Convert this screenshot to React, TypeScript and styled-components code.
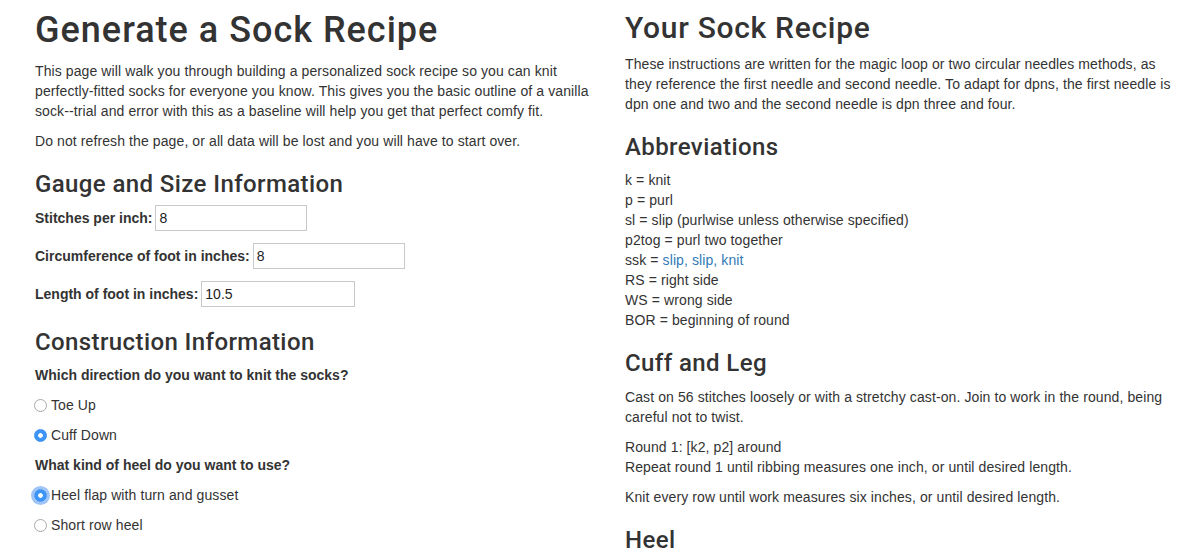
import styled, { createGlobalStyle } from 'styled-components';

/** style Start */
const GlobalStyle = createGlobalStyle`
  * {
    box-sizing: border-box;
  }
  body {
    margin: 0;
    background: #fff;
    color: #333;
    font-family: 'Liberation Sans', Arial, sans-serif;
    font-size: 14px;
    line-height: 20px;
    letter-spacing: 0.1px;
  }
`;

const Container = styled.div`
  padding: 0 20px;
  display: grid;
  grid-template-columns: 590px 590px;
`;

const Column = styled.section`
  padding: 0 15px;
  & > :first-child {
    margin-top: 11px;
  }
`;

const Title = styled.h1<{ $size: number; $spacing: number }>`
  font-family: Roboto, 'Liberation Sans', sans-serif;
  font-size: ${(props) => props.$size}px;
  line-height: 1.1;
  font-weight: 500;
  letter-spacing: ${(props) => props.$spacing}px;
  margin: 20px 0 10px;
`;

const SubTitle = styled.h3`
  font-family: Roboto, 'Liberation Sans', sans-serif;
  font-size: 24px;
  line-height: 26.4px;
  font-weight: 500;
  letter-spacing: 0.4px;
  margin: 20px 0 10px;
`;

const Text = styled.p`
  margin: 0 0 10px;
`;

const Link = styled.a`
  color: #337ab7;
  text-decoration: none;
`;

const FieldGroup = styled.div`
  display: grid;
  row-gap: 12px;
  margin: -2px 0 22px;
`;

const Field = styled.div`
  display: flex;
  align-items: center;
  height: 26px;
`;

const Label = styled.label`
  font-weight: 700;
  letter-spacing: 0;
  margin-right: 3px;
`;

const Input = styled.input<{ $width?: number }>`
  width: ${(props) => props.$width ?? 152}px;
  height: 26px;
  border: 1px solid #c9c9c9;
  padding: 0 3px;
  font-family: inherit;
  font-size: 14px;
  color: #222;
  outline: none;
`;

const Question = styled.div`
  font-weight: 700;
  letter-spacing: 0;
  margin-bottom: 10px;
`;

const Choice = styled.label`
  display: flex;
  align-items: center;
  height: 20px;
  margin-bottom: 10px;
`;

const Radio = styled.input<{ $focused?: boolean }>`
  appearance: none;
  width: 13px;
  height: 13px;
  margin: 0 4px 0 -1px;
  border-radius: 50%;
  border: 1px solid #a8a8a8;
  background: #fff;
  &:checked {
    border-color: #3b8ff0;
    background: radial-gradient(circle, #fff 0 2px, #3d96f7 2.6px);
  }
  ${(props) =>
    props.$focused &&
    `box-shadow: 0 0 0 3px rgba(80, 150, 240, 0.55);`}
`;
/** style End */

const abbreviations = [
  ['k', 'knit'],
  ['p', 'purl'],
  ['sl', 'slip (purlwise unless otherwise specified)'],
  ['p2tog', 'purl two together'],
  ['ssk', 'slip, slip, knit'],
  ['RS', 'right side'],
  ['WS', 'wrong side'],
  ['BOR', 'beginning of round'],
];

function App() {
  return (
    <>
      <GlobalStyle />
      <Container>
        <Column>
          <Title $size={36} $spacing={1}>
            Generate a Sock Recipe
          </Title>
          <Text>
            This page will walk you through building a personalized sock recipe so you can knit
            perfectly-fitted socks for everyone you know. This gives you the basic outline of a
            vanilla sock--trial and error with this as a baseline will help you get that perfect
            comfy fit.
          </Text>
          <Text>Do not refresh the page, or all data will be lost and you will have to start over.</Text>

          <SubTitle>Gauge and Size Information</SubTitle>
          <FieldGroup>
            <Field>
              <Label>Stitches per inch:</Label>
              <Input type="text" defaultValue="8" />
            </Field>
            <Field>
              <Label>Circumference of foot in inches:</Label>
              <Input type="text" defaultValue="8" />
            </Field>
            <Field>
              <Label>Length of foot in inches:</Label>
              <Input type="text" defaultValue="10.5" $width={154} />
            </Field>
          </FieldGroup>

          <SubTitle>Construction Information</SubTitle>
          <Question>Which direction do you want to knit the socks?</Question>
          <Choice>
            <Radio type="radio" name="direction" />
            Toe Up
          </Choice>
          <Choice>
            <Radio type="radio" name="direction" defaultChecked />
            Cuff Down
          </Choice>
          <Question>What kind of heel do you want to use?</Question>
          <Choice>
            <Radio type="radio" name="heel" defaultChecked $focused />
            Heel flap with turn and gusset
          </Choice>
          <Choice>
            <Radio type="radio" name="heel" />
            Short row heel
          </Choice>
        </Column>

        <Column>
          <Title $size={30} $spacing={0.7}>
            Your Sock Recipe
          </Title>
          <Text>
            These instructions are written for the magic loop or two circular needles methods, as
            they reference the first needle and second needle. To adapt for dpns, the first needle
            is dpn one and two and the second needle is dpn three and four.
          </Text>

          <SubTitle>Abbreviations</SubTitle>
          <Text>
            {abbreviations.map(([abbr, meaning]) => (
              <div key={abbr}>
                {abbr} = {abbr === 'ssk' ? <Link href="#">{meaning}</Link> : meaning}
              </div>
            ))}
          </Text>

          <SubTitle>Cuff and Leg</SubTitle>
          <Text>
            Cast on 56 stitches loosely or with a stretchy cast-on. Join to work in the round, being
            careful not to twist.
          </Text>
          <Text>
            Round 1: [k2, p2] around
            <br />
            Repeat round 1 until ribbing measures one inch, or until desired length.
          </Text>
          <Text>Knit every row until work measures six inches, or until desired length.</Text>

          <SubTitle>Heel</SubTitle>
        </Column>
      </Container>
    </>
  );
}

export default App;
